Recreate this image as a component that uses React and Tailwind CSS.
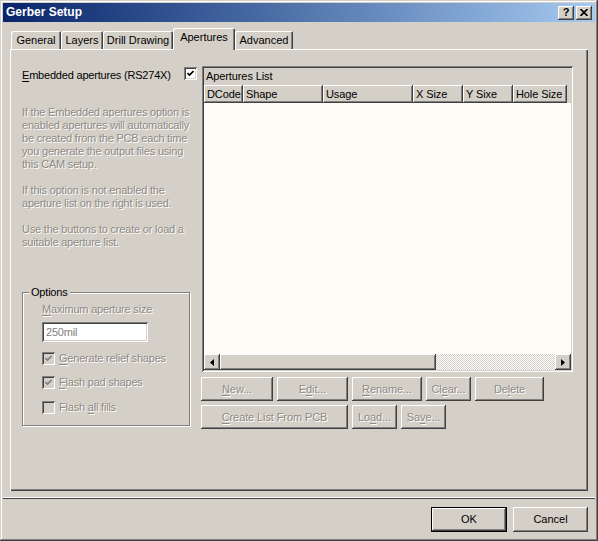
import React from 'react'

// classic 3D edges
const raised = 'shadow-[inset_-1px_-1px_#404040,inset_1px_1px_#ffffff,inset_-2px_-2px_#808080]'
const sunken = 'shadow-[inset_1px_1px_#808080,inset_-1px_-1px_#ffffff,inset_2px_2px_#404040,inset_-2px_-2px_#d4d0c8]'
const dim = 'text-[#8d8a84] [text-shadow:1px_1px_0_#ffffff]'

function Key({ children }) {
  return <span className="underline underline-offset-[2px]">{children}</span>
}

function Button({ w, children, disabled = true }) {
  return (
    <div className={`${w} h-[24px] flex items-center justify-center bg-[#d4d0c8] ${raised} ${disabled ? dim : 'text-black'}`}>
      {children}
    </div>
  )
}

function Check({ checked, disabled }) {
  return (
    <div className={`w-[13px] h-[13px] shrink-0 flex items-center justify-center ${sunken} ${disabled ? 'bg-[#d4d0c8]' : 'bg-white'}`}>
      {checked && (
        <svg width="7" height="7" viewBox="0 0 7 7">
          <path d="M0.5 3 L2.5 5 L6.5 1" fill="none" stroke={disabled ? '#808080' : '#000'} strokeWidth="1.7" />
        </svg>
      )}
    </div>
  )
}

function Tab({ w, children, active }) {
  if (active) {
    return (
      <div className={`${w} h-[22px] -mb-[1px] relative z-10 bg-[#d4d0c8] rounded-t-[2px] flex justify-center pt-[3px] shadow-[inset_1px_1px_#ffffff,inset_-1px_0_#404040,inset_-2px_0_#808080]`}>
        {children}
      </div>
    )
  }
  return (
    <div className={`${w} h-[18px] bg-[#d4d0c8] rounded-t-[2px] flex items-center justify-center shadow-[inset_1px_1px_#ffffff,inset_-1px_0_#404040,inset_-2px_0_#808080]`}>
      {children}
    </div>
  )
}

const columns = [
  { label: 'DCode', w: 'w-[39px]' },
  { label: 'Shape', w: 'w-[80px]' },
  { label: 'Usage', w: 'w-[90px]' },
  { label: 'X Size', w: 'w-[50px]' },
  { label: 'Y Sixe', w: 'w-[50px]' },
  { label: 'Hole Size', w: 'w-[54px]' },
]

function ScrollArrow({ dir }) {
  return (
    <div className={`w-[16px] h-[16px] shrink-0 bg-[#d4d0c8] flex items-center justify-center ${raised}`}>
      <svg width="4" height="7" viewBox="0 0 4 7">
        {dir === 'left' ? <path d="M4 0 L0 3.5 L4 7 Z" fill="#000" /> : <path d="M0 0 L4 3.5 L0 7 Z" fill="#000" />}
      </svg>
    </div>
  )
}

export default function App() {
  return (
    <div className="w-[598px] h-[541px] bg-[#d4d0c8] p-[3px] flex flex-col font-['Liberation_Sans',Arial,sans-serif] text-[11px] leading-[13px] text-black shadow-[inset_-1px_-1px_#404040,inset_1px_1px_#d4d0c8,inset_-2px_-2px_#808080,inset_2px_2px_#ffffff]">
      {/* title bar */}
      <div className="h-[19px] shrink-0 bg-linear-to-r from-[#0a246a] to-[#a6caf0] flex items-center pl-[3px] pr-[3px]">
        <span className="text-white font-bold text-[12px]">Gerber Setup</span>
        <div className="ml-auto flex gap-[2px]">
          <div className={`w-[16px] h-[14px] bg-[#d4d0c8] flex items-center justify-center font-bold text-[11px] leading-none ${raised}`}>?</div>
          <div className={`w-[16px] h-[14px] bg-[#d4d0c8] flex items-center justify-center ${raised}`}>
            <svg width="8" height="7" viewBox="0 0 8 7">
              <path d="M0.5 0 L7.5 7 M7.5 0 L0.5 7" stroke="#000" strokeWidth="1.6" />
            </svg>
          </div>
        </div>
      </div>

      {/* tabs */}
      <div className="mt-[6px] ml-[7px] w-[578px] flex flex-col">
        <div className="h-[21px] flex items-end pl-[1px]">
          <Tab w="w-[50px]">General</Tab>
          <Tab w="w-[42px]">Layers</Tab>
          <Tab w="w-[70px]">Drill Drawing</Tab>
          <Tab w="w-[62px]" active>Apertures</Tab>
          <Tab w="w-[58px]">Advanced</Tab>
        </div>

        <div className="h-[442px] flex pt-[17px] pl-[12px] shadow-[inset_1px_1px_#ffffff,inset_-1px_-1px_#404040,inset_-2px_-2px_#808080]">
          {/* left column */}
          <div className="w-[175px] flex flex-col tracking-[-0.2px]">
            <div className="h-[13px] mt-[1px] flex items-center justify-between">
              <span className="mt-[3px]"><Key>E</Key>mbedded apertures (RS274X)</span>
              <Check checked />
            </div>

            <div className={`mt-[26px] flex flex-col gap-[13px] ${dim}`}>
              <p>
                If the Embedded apertures option is<br />
                enabled apertures will automatically<br />
                be created from the PCB each time<br />
                you generate the output files using<br />
                this CAM setup.
              </p>
              <p>
                If this option is not enabled the<br />
                aperture list on the right is used.
              </p>
              <p>
                Use the buttons to create or load a<br />
                suitable aperture list.
              </p>
            </div>

            <div className="relative mt-[43px] w-[168px] h-[134px] border border-[#808080] shadow-[inset_1px_1px_#ffffff,1px_1px_#ffffff] pl-[19px] pt-[10px] flex flex-col">
              <span className="absolute left-[6px] -top-[7px] px-[2px] bg-[#d4d0c8]">Options</span>
              <span className={dim}><Key>M</Key>aximum aperture size</span>
              <div className={`mt-[6px] w-[106px] h-[20px] bg-white flex items-center pl-[4px] ${sunken}`}>
                <span className="text-[#808080]">250mil</span>
              </div>
              <div className="mt-[10px] h-[13px] flex items-center gap-[4px]">
                <Check checked disabled />
                <span className={dim}><Key>G</Key>enerate relief shapes</span>
              </div>
              <div className="mt-[11px] h-[13px] flex items-center gap-[4px]">
                <Check checked disabled />
                <span className={dim}><Key>F</Key>lash pad shapes</span>
              </div>
              <div className="mt-[12px] h-[13px] flex items-center gap-[4px]">
                <Check disabled />
                <span className={dim}>Flash <Key>a</Key>ll fills</span>
              </div>
            </div>
          </div>

          {/* aperture list */}
          <div className="ml-[5px] w-[371px] flex flex-col tracking-[-0.1px]">
            <div className={`h-[306px] p-[2px] flex flex-col bg-[#d4d0c8] ${sunken}`}>
              <div className="h-[17px] flex items-center pl-[2px]">Apertures List</div>
              <div className="h-[18px] flex bg-[#d4d0c8]">
                {columns.map((c) => (
                  <div key={c.label} className={`${c.w} h-full flex items-center pl-[3px] ${raised}`}>
                    {c.label}
                  </div>
                ))}
              </div>
              <div className="flex-1 bg-[#fffcf7]" />
              <div className="h-[16px] flex">
                <ScrollArrow dir="left" />
                <div className={`w-[216px] h-full bg-[#d4d0c8] ${raised}`} />
                <div className="flex-1 h-full bg-[image:repeating-conic-gradient(#ffffff_0_25%,#d4d0c8_0_50%)] bg-[length:2px_2px]" />
                <ScrollArrow dir="right" />
              </div>
            </div>

            <div className="mt-[5px] -ml-[1px] flex gap-[4px]">
              <Button w="w-[72px]"><Key>N</Key>ew...</Button>
              <Button w="w-[71px]">E<Key>d</Key>it...</Button>
              <Button w="w-[70px]"><Key>R</Key>ename...</Button>
              <Button w="w-[45px]">Cl<Key>e</Key>ar...</Button>
              <Button w="w-[69px]">De<Key>l</Key>ete</Button>
            </div>
            <div className="mt-[4px] -ml-[1px] flex gap-[4px]">
              <Button w="w-[147px]"><Key>C</Key>reate List From PCB</Button>
              <Button w="w-[45px]">Lo<Key>a</Key>d...</Button>
              <Button w="w-[45px]">Sa<Key>v</Key>e...</Button>
            </div>
          </div>
        </div>
      </div>

      {/* separator + dialog buttons */}
      <div className="mt-[6px] h-[2px] border-t border-t-[#ffffff] border-b border-b-[#404040]" />
      <div className="mt-[8px] flex justify-end gap-[6px] pr-[7px]">
        <div className="w-[76px] h-[25px] flex items-center justify-center bg-[#d4d0c8] shadow-[inset_0_0_0_1px_#000000,inset_-2px_-2px_#404040,inset_2px_2px_#ffffff,inset_-3px_-3px_#808080]">
          OK
        </div>
        <div className={`w-[75px] h-[25px] flex items-center justify-center bg-[#d4d0c8] ${raised}`}>
          Cancel
        </div>
      </div>
    </div>
  )
}
